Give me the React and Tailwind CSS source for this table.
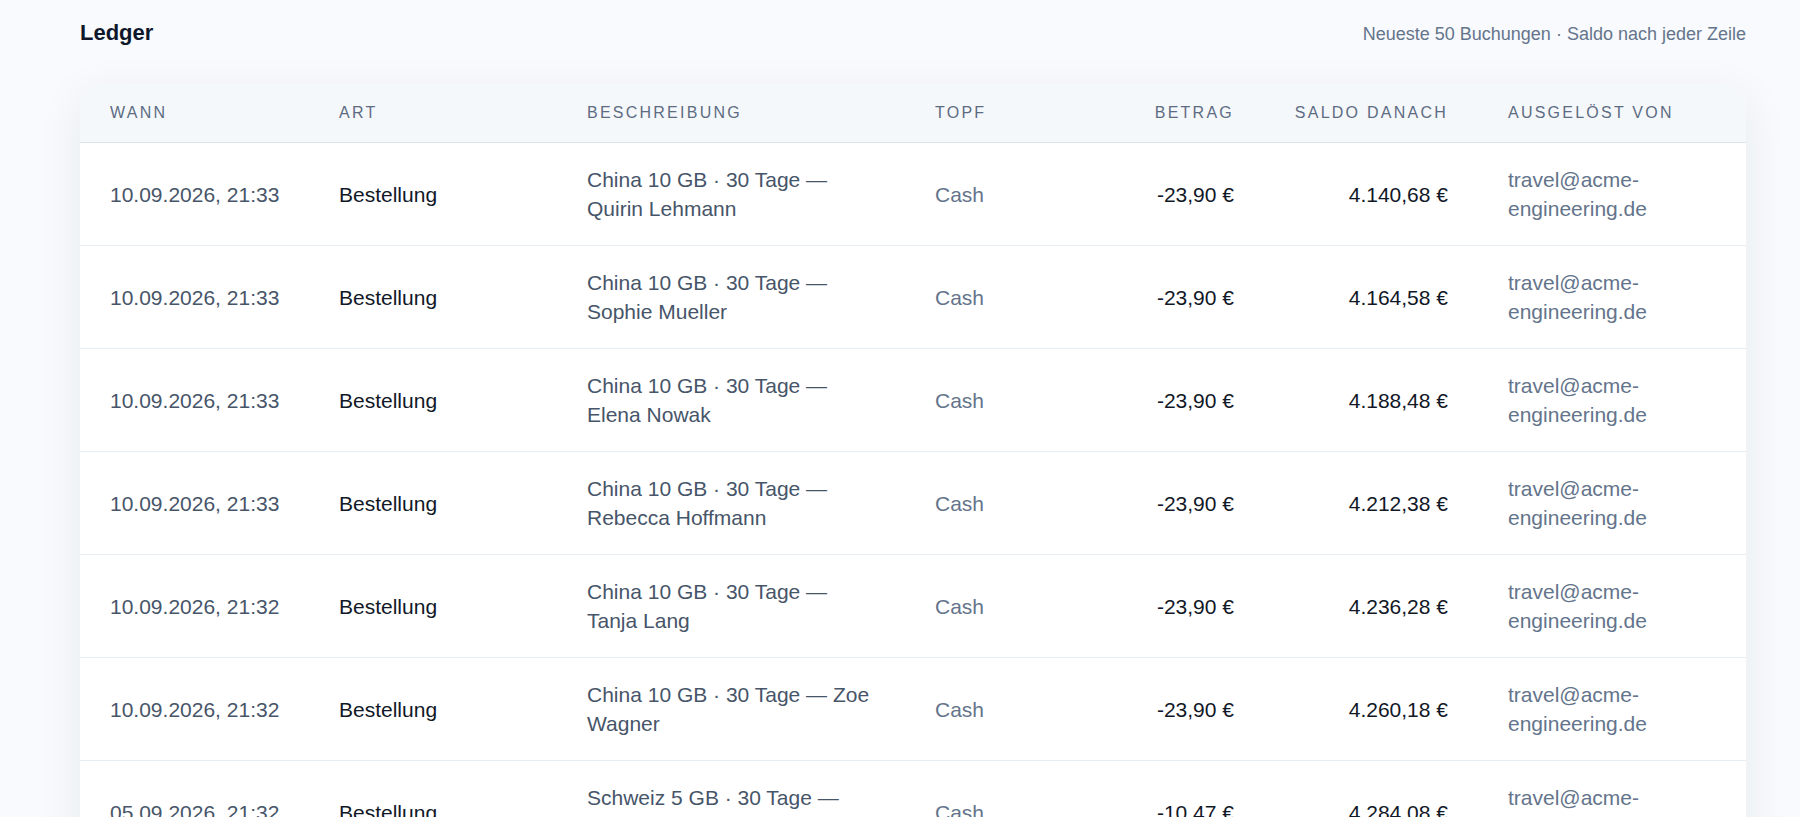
import React from 'react';

const rows = [
  { when: '10.09.2026, 21:33', desc: 'China 10 GB · 30 Tage — Quirin Lehmann', amount: '-23,90 €', balance: '4.140,68 €' },
  { when: '10.09.2026, 21:33', desc: 'China 10 GB · 30 Tage — Sophie Mueller', amount: '-23,90 €', balance: '4.164,58 €' },
  { when: '10.09.2026, 21:33', desc: 'China 10 GB · 30 Tage — Elena Nowak', amount: '-23,90 €', balance: '4.188,48 €' },
  { when: '10.09.2026, 21:33', desc: 'China 10 GB · 30 Tage — Rebecca Hoffmann', amount: '-23,90 €', balance: '4.212,38 €' },
  { when: '10.09.2026, 21:32', desc: 'China 10 GB · 30 Tage — Tanja Lang', amount: '-23,90 €', balance: '4.236,28 €' },
  { when: '10.09.2026, 21:32', desc: 'China 10 GB · 30 Tage — Zoe Wagner', amount: '-23,90 €', balance: '4.260,18 €' },
  { when: '05.09.2026, 21:32', desc: 'Schweiz 5 GB · 30 Tage — Lukas Becker', amount: '-10,47 €', balance: '4.284,08 €' },
  { when: '05.09.2026, 21:31', desc: 'Schweiz 5 GB · 30 Tage — Mia Schulz', amount: '-10,47 €', balance: '4.294,55 €' },
];

const th = 'px-[30px] py-[19px] text-[16px] leading-[20px] font-normal uppercase tracking-[0.14em] text-[#5d6c82]';
const td = 'px-[30px] py-[22px] align-middle';

export default function App() {
  return (
    <div className="min-h-screen bg-[#f8fafd] pl-[80px] pr-[54px] pt-[19px] font-['Liberation_Sans',Arial,sans-serif]">
      <div className="flex items-baseline justify-between">
        <h1 className="text-[22px] leading-[28px] font-bold text-[#0f172a]">Ledger</h1>
        <p className="text-[18px] leading-[28px] text-[#64748b]">Neueste 50 Buchungen · Saldo nach jeder Zeile</p>
      </div>

      <div className="mt-[36px] bg-white rounded-[18px] overflow-hidden shadow-[0_12px_48px_rgba(30,41,59,0.07)]">
        <table className="w-full table-fixed border-collapse text-[21px] leading-[29px]">
          <colgroup>
            <col className="w-[229px]" />
            <col className="w-[248px]" />
            <col className="w-[348px]" />
            <col className="w-[180px]" />
            <col className="w-[179px]" />
            <col className="w-[214px]" />
            <col />
          </colgroup>
          <thead>
            <tr className="bg-[#f5f8fb] border-b border-[#dbe4ee]">
              <th className={`${th} text-left`}>Wann</th>
              <th className={`${th} text-left`}>Art</th>
              <th className={`${th} text-left`}>Beschreibung</th>
              <th className={`${th} text-left`}>Topf</th>
              <th className={`${th} text-right`}>Betrag</th>
              <th className={`${th} text-right`}>Saldo danach</th>
              <th className={`${th} text-left`}>Ausgelöst von</th>
            </tr>
          </thead>
          <tbody>
            {rows.map((r, i) => (
              <tr key={i} className="border-b border-[#e8eef5]">
                <td className={`${td} whitespace-nowrap text-[#475569]`}>{r.when}</td>
                <td className={`${td} text-[#111827]`}>Bestellung</td>
                <td className={`${td} text-[#475569]`}>{r.desc}</td>
                <td className={`${td} text-[#64748b]`}>Cash</td>
                <td className={`${td} whitespace-nowrap text-right text-[#111827]`}>{r.amount}</td>
                <td className={`${td} whitespace-nowrap text-right text-[#111827]`}>{r.balance}</td>
                <td className={`${td} text-[#64748b]`}>travel@acme-engineering.de</td>
              </tr>
            ))}
          </tbody>
        </table>
      </div>
    </div>
  );
}
